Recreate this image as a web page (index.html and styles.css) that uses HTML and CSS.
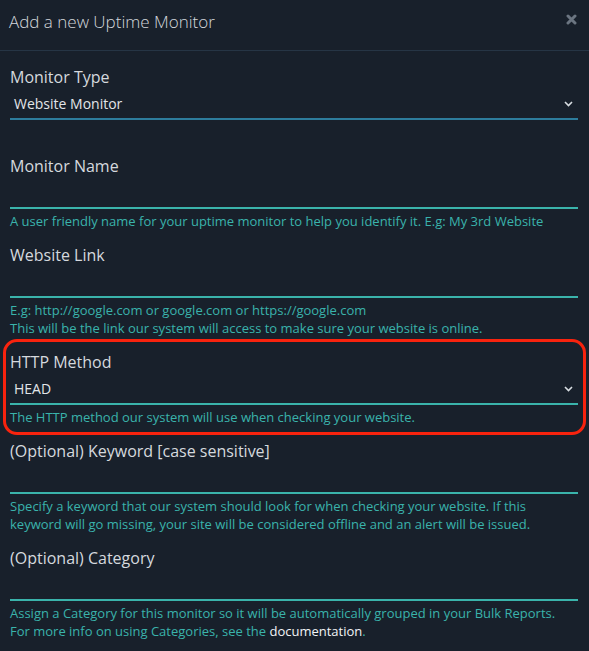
FILE: index.html
```html
<!DOCTYPE html>
<html>
<head>
    <title>Add a new Uptime Monitor</title>
    <link rel="stylesheet" href="styles.css">
</head>
<body>
    <div class="modal-header">
        <h1>Add a new Uptime Monitor</h1>
        <span class="close">
            <svg width="11" height="11" viewBox="0 0 11 11"><path d="M2 2 L9 9 M9 2 L2 9" stroke="#6b7581" stroke-width="3" stroke-linecap="round"/></svg>
        </span>
    </div>

    <div class="modal-body">
        <div class="field">
            <label>Monitor Type</label>
            <div class="select primary">
                <span>Website Monitor</span>
                <svg class="chevron" width="9" height="6" viewBox="0 0 9 6"><path d="M1 1 L4.5 4.5 L8 1" fill="none" stroke="#d8dde2" stroke-width="1.6"/></svg>
            </div>
            <p class="help"></p>
        </div>

        <div class="field">
            <label>Monitor Name</label>
            <div class="input"></div>
            <p class="help">A user friendly name for your uptime monitor to help you identify it. E.g: My 3rd Website</p>
        </div>

        <div class="field">
            <label>Website Link</label>
            <div class="input"></div>
            <p class="help">E.g: http://google.com or google.com or https://google.com<br>This will be the link our system will access to make sure your website is online.</p>
        </div>

        <div class="field highlight">
            <label>HTTP Method</label>
            <div class="select">
                <span>HEAD</span>
                <svg class="chevron" width="9" height="6" viewBox="0 0 9 6"><path d="M1 1 L4.5 4.5 L8 1" fill="none" stroke="#d8dde2" stroke-width="1.6"/></svg>
            </div>
            <p class="help">The HTTP method our system will use when checking your website.</p>
        </div>

        <div class="field">
            <label>(Optional) Keyword [case sensitive]</label>
            <div class="input"></div>
            <p class="help">Specify a keyword that our system should look for when checking your website. If this keyword will go missing, your site will be considered offline and an alert will be issued.</p>
        </div>

        <div class="field">
            <label>(Optional) Category</label>
            <div class="input"></div>
            <p class="help">Assign a Category for this monitor so it will be automatically grouped in your Bulk Reports.<br>For more info on using Categories, see the <a href="#">documentation</a>.</p>
        </div>
    </div>
</body>
</html>
```

FILE: styles.css
```css
body {
    margin: 0;
    background: #18202b;
    font-family: "Open Sans", "Noto Sans", sans-serif;
    color: #d5d9de;
    overflow: hidden;
}
.modal-header {
    display: flex;
    justify-content: space-between;
    align-items: flex-start;
    height: 50px;
    padding: 0 12px 0 9px;
    border-bottom: 1px solid #263545;
}
.modal-header h1 {
    margin: 10px 0 0;
    font-size: 17px;
    line-height: 24px;
    font-weight: 300;
    color: #d3d7dc;
}
.close {
    margin-top: 14px;
    display: flex;
}
.modal-body {
    padding: 15px 11px 0 10px;
}
.field {
    margin-bottom: 14px;
}
.field label {
    display: block;
    font-size: 16px;
    line-height: 22px;
    color: #d5d9de;
}
.input, .select {
    height: 30px;
    border-bottom: 2px solid #3ab3ab;
}
.select {
    display: flex;
    justify-content: space-between;
    align-items: center;
    padding: 0 5px 0 4px;
    font-size: 14px;
    color: #e2e5e8;
}
.select.primary {
    border-bottom-color: #2d7c9c;
}
.chevron {
    margin-top: 2px;
}
.help {
    margin: 3px 0 0;
    min-height: 18px;
    font-size: 13px;
    line-height: 18px;
    color: #3ab3ab;
}
.help a {
    color: #f2f4f6;
    text-decoration: none;
}
.highlight {
    position: relative;
}
.highlight::after {
    content: "";
    position: absolute;
    top: -12px;
    bottom: -9px;
    left: -7px;
    right: -8px;
    border: 3px solid #f8230e;
    border-radius: 14px;
}
```
